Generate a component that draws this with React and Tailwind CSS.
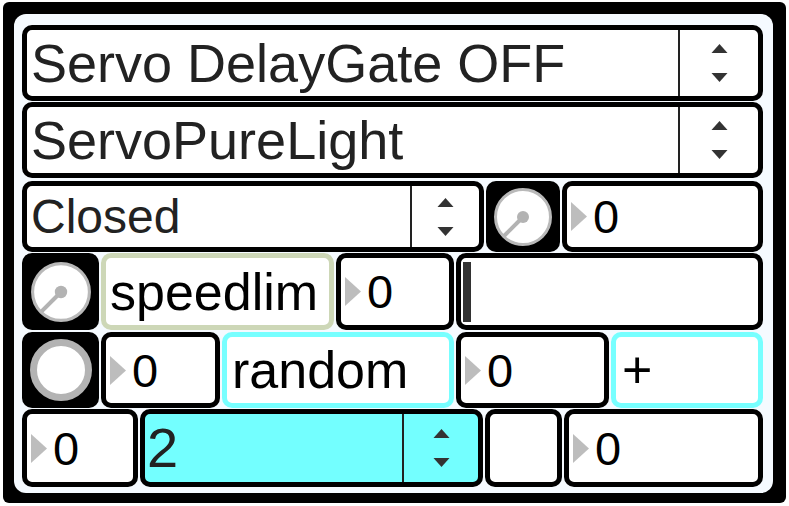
import React from 'react';

const font = "font-['Liberation_Sans',Arial,sans-serif]";

const Arrows = () => (
    <svg width="17" height="38" viewBox="0 0 17 38">
        <path d="M8.5 0 L16.5 9 L0.5 9 Z" fill="#333" />
        <path d="M0.5 29 L16.5 29 L8.5 38 Z" fill="#333" />
    </svg>
);

const Tri = () => (
    <svg width="16" height="29" viewBox="0 0 16 29" className="shrink-0">
        <path d="M0 0 L16 14.5 L0 29 Z" fill="#bdbdbd" />
    </svg>
);

const Dial = ({ size = 60 }) => (
    <svg width={size} height={size} viewBox="0 0 60 60">
        <circle cx="30" cy="30" r="27.5" fill="white" stroke="#b9b9b9" strokeWidth="3" />
        <line x1="30" y1="30" x2="11" y2="49" stroke="#b3b3b3" strokeWidth="4" />
        <circle cx="30" cy="30" r="6" fill="#b3b3b3" />
    </svg>
);

const Toggle = () => (
    <svg width="62" height="62" viewBox="0 0 62 62">
        <circle cx="31" cy="31" r="27.5" fill="white" stroke="#b3b3b3" strokeWidth="7" />
    </svg>
);

// umenu
const Menu = ({ label, w, h, split, size, cyan, pl = 'pl-[4px]' }) => (
    <div
        className={`shrink-0 flex border-[5px] border-black rounded-[10px] overflow-hidden ${cyan ? 'bg-[#73ffff] text-[#222]' : 'bg-white text-[#222]'} ${w} ${h}`}
    >
        <div className={`flex-1 flex items-center leading-none ${pl} ${size}`}>{label}</div>
        <div className={`${split} h-full border-l-2 border-[#222] flex items-center justify-center`}>
            <Arrows />
        </div>
    </div>
);

const Num = ({ w, className = '' }) => (
    <div
        className={`shrink-0 flex items-center gap-[6px] pl-[4px] border-[5px] border-black rounded-[10px] bg-white text-black text-[47px] leading-none ${w} ${className}`}
    >
        <Tri />
        <span>0</span>
    </div>
);

const Obj = ({ label, w, color, pl }) => (
    <div
        className={`shrink-0 flex items-center border-[5px] rounded-[10px] bg-white text-black text-[52px] leading-none ${color} ${w} ${pl}`}
    >
        {label}
    </div>
);

const App = () => {
    return (
        <div className={`w-[789px] h-[506px] bg-white pt-[2px] pl-[3px] ${font}`}>
            <div className="w-[783px] h-[501px] bg-black rounded-[6px] pt-[12px] pl-[11px] pr-[13px] pb-[10px]">
                <div className="w-full h-full bg-[#f5faff] rounded-[12px] pt-[11px] pl-[8px] pr-[10px] pb-[6px] flex flex-col">
                    {/* row 1 */}
                    <Menu label="Servo DelayGate OFF" w="w-full" h="h-[76px]" split="w-[80px]" size="text-[54px]" />
                    {/* row 2 */}
                    <Menu label="ServoPureLight" w="w-full mt-[1px]" h="h-[76px]" split="w-[80px]" size="text-[54px]" />

                    {/* row 3 */}
                    <div className="flex gap-[2px] h-[71px] mt-[3px]">
                        <Menu label="Closed" w="w-[462px]" h="h-full" split="w-[69px]" size="text-[48px]" />
                        <div className="shrink-0 w-[74px] h-full bg-black rounded-[10px] flex items-center justify-center">
                            <Dial size={60} />
                        </div>
                        <Num w="flex-1" />
                    </div>

                    {/* row 4 */}
                    <div className="flex gap-[2px] h-[77px] mt-[1px]">
                        <div className="shrink-0 w-[77px] h-full bg-black rounded-[10px] flex items-center justify-center">
                            <Dial size={62} />
                        </div>
                        <Obj label="speedlim" w="w-[233px]" color="border-[#cdd7b7]" pl="pl-[4px]" />
                        <Num w="w-[118px]" />
                        <div className="flex-1 flex items-center pl-[2px] border-[5px] border-black rounded-[10px] bg-white">
                            <div className="w-[8px] h-[60px] bg-[#333]" />
                        </div>
                    </div>

                    {/* row 5 */}
                    <div className="flex gap-[2px] h-[76px] mt-[2px]">
                        <div className="shrink-0 w-[77px] h-full bg-black rounded-[10px] flex items-center justify-center">
                            <Toggle />
                        </div>
                        <Num w="w-[119px]" />
                        <Obj label="random" w="w-[232px]" color="border-[#77ffff]" pl="pl-[5px]" />
                        <Num w="w-[153px]" />
                        <Obj label="+" w="flex-1" color="border-[#77ffff]" pl="pl-[6px]" />
                    </div>

                    {/* row 6 */}
                    <div className="flex gap-[2px] h-[78px] mt-[1px]">
                        <Num w="w-[116px]" />
                        <Menu label="2" w="w-[343px]" h="h-full" split="w-[76px]" size="text-[56px]" cyan pl="pl-[2px]" />
                        <div className="shrink-0 w-[77px] h-full border-[5px] border-black rounded-[10px] bg-white" />
                        <Num w="flex-1" />
                    </div>
                </div>
            </div>
        </div>
    );
};

export default App;
